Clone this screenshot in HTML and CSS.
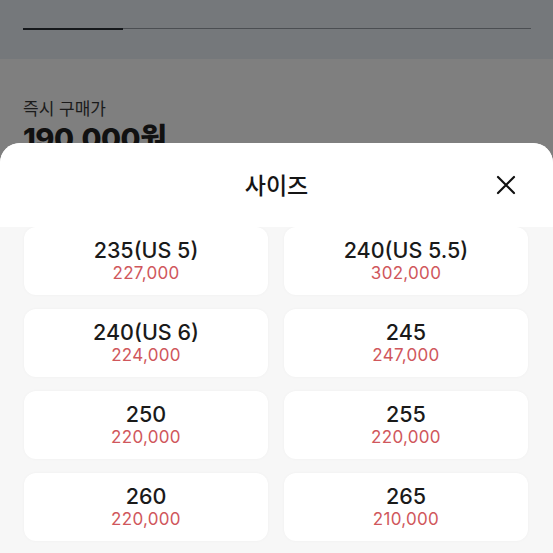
FILE: index.html
```html
<!DOCTYPE html>
<html lang="ko">
<head>
<meta charset="utf-8">
<link rel="stylesheet" href="styles.css">
</head>
<body>
<div class="page">
  <div class="topbar">
    <div class="tabline"><span class="tab-active"></span></div>
  </div>
  <div class="price-area">
    <div class="price-label">즉시 구매가</div>
    <div class="price-value">190,000원</div>
  </div>
</div>
<div class="sheet">
  <div class="sheet-head">
    <div class="sheet-title">사이즈</div>
    <svg class="close" width="20" height="20" viewBox="0 0 20 20"><path d="M2 2 L18 18 M18 2 L2 18" stroke="#111" stroke-width="2.2" stroke-linecap="round" fill="none"/></svg>
  </div>
  <div class="grid">
    <div class="card"><div class="size">235(US 5)</div><div class="cost">227,000</div></div>
    <div class="card"><div class="size">240(US 5.5)</div><div class="cost">302,000</div></div>
    <div class="card"><div class="size">240(US 6)</div><div class="cost">224,000</div></div>
    <div class="card"><div class="size">245</div><div class="cost">247,000</div></div>
    <div class="card"><div class="size">250</div><div class="cost">220,000</div></div>
    <div class="card"><div class="size">255</div><div class="cost">220,000</div></div>
    <div class="card"><div class="size">260</div><div class="cost">220,000</div></div>
    <div class="card"><div class="size">265</div><div class="cost">210,000</div></div>
  </div>
</div>
</body>
</html>
```
FILE: styles.css
```css
* { box-sizing: border-box; }
html, body { margin: 0; padding: 0; }
body {
  width: 553px;
  height: 553px;
  overflow: hidden;
  position: relative;
  background: #7f7f7f;
  font-family: Inter, "Noto Sans CJK KR", sans-serif;
}
.topbar {
  height: 59px;
  background: #75787b;
  padding: 29px 22px 0 23px;
}
.tabline {
  height: 1px;
  background: #4b4e52;
  position: relative;
}
.tab-active {
  display: block;
  width: 100px;
  height: 2px;
  margin-top: -1px;
  background: #15181b;
}
.price-area {
  padding: 38px 23px 0;
}
.price-label {
  font-family: "Noto Sans CJK KR", sans-serif;
  font-size: 17px;
  line-height: 22px;
  color: #1b1b1b;
}
.price-value {
  margin-top: 3px;
  font-family: Inter, "Noto Sans CJK KR", sans-serif;
  font-weight: 800;
  font-size: 29px;
  line-height: 34px;
  color: #111;
  letter-spacing: -0.5px;
}
.sheet {
  position: absolute;
  left: 0;
  top: 143px;
  width: 553px;
  height: 420px;
  background: #f7f7f7;
  border-radius: 20px 20px 0 0;
  overflow: hidden;
}
.sheet-head {
  height: 84px;
  background: #fff;
  display: flex;
  align-items: center;
  justify-content: center;
  position: relative;
}
.sheet-title {
  font-family: "Noto Sans CJK KR", sans-serif;
  font-size: 23px;
  font-weight: 500;
  color: #151515;
  margin-top: -2px;
}
.close {
  position: absolute;
  right: 37px;
  top: 32px;
}
.grid {
  display: grid;
  grid-template-columns: 244px 244px;
  column-gap: 16px;
  row-gap: 14px;
  padding: 0 25px 0 24px;
}
.card {
  height: 68px;
  background: #fff;
  border-radius: 12px;
  box-shadow: 0 0 3px rgba(0,0,0,0.04);
  display: flex;
  flex-direction: column;
  align-items: center;
  justify-content: center;
}
.size {
  font-size: 21.5px;
  line-height: 24px;
  font-weight: 500;
  color: #1a1a1a;
  margin-top: -1px;
}
.cost {
  font-size: 17px;
  line-height: 21px;
  margin-top: 1px;
  color: #d0575c;
  letter-spacing: 0.3px;
}
```
